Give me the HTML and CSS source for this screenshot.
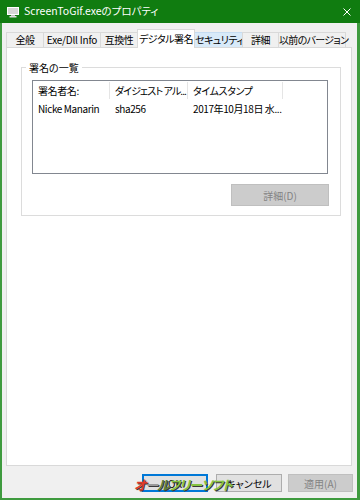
FILE: index.html
```html
<!DOCTYPE html>
<html lang="ja">
<head>
  <meta charset="UTF-8" />
  <title>ScreenToGif.exeのプロパティ</title>
  <link rel="stylesheet" href="styles.css">
</head>
<body>
  <div class="window">
    <div class="titlebar">
      <svg class="app-icon" width="12" height="11" viewBox="0 0 12 11">
        <rect x="0.5" y="0.5" width="11" height="7" fill="#d6d6d6" stroke="#ffffff"/>
        <rect x="4" y="8" width="4" height="1" fill="#bfbfbf"/>
        <rect x="2.5" y="9" width="7" height="1.5" fill="#e0e0e0"/>
      </svg>
      <span class="title">ScreenToGif.exeのプロパティ</span>
      <svg class="close" width="8" height="8" viewBox="0 0 8 8">
        <path d="M0.5 0.5 L7.5 7.5 M7.5 0.5 L0.5 7.5" stroke="#ffffff" stroke-width="1"/>
      </svg>
    </div>

    <div class="frame">
      <div class="tabs">
        <div class="tab">全般</div>
        <div class="tab">Exe/Dll Info</div>
        <div class="tab">互換性</div>
        <div class="tab tab-active">デジタル署名</div>
        <div class="tab tab-hover">セキュリティ</div>
        <div class="tab">詳細</div>
        <div class="tab">以前のバージョン</div>
      </div>

      <div class="panel">
        <fieldset class="group">
          <legend>署名の一覧</legend>
          <div class="list">
            <div class="list-head">
              <div class="col col-name">署名者名:</div>
              <div class="col col-digest">ダイジェスト アル...</div>
              <div class="col col-time">タイムスタンプ</div>
              <div class="col col-rest"></div>
            </div>
            <div class="list-row">
              <div class="col col-name">Nicke Manarin</div>
              <div class="col col-digest">sha256</div>
              <div class="col col-time">2017年10月18日 水...</div>
            </div>
          </div>
          <div class="group-actions">
            <button class="btn btn-disabled btn-detail">詳細(D)</button>
          </div>
        </fieldset>
      </div>

      <div class="actions">
        <button class="btn btn-default">OK</button>
        <button class="btn">キャンセル</button>
        <button class="btn btn-disabled">適用(A)</button>
        <div class="watermark"><span class="wm-red">オ</span><span class="wm-gray">ー</span><span class="wm-dark">ル</span><span class="wm-green">フリーソフト</span></div>
      </div>
    </div>
  </div>
</body>
</html>
```

FILE: styles.css
```css
* {
  margin: 0;
  padding: 0;
  box-sizing: border-box;
}

body {
  width: 360px;
  height: 500px;
  overflow: hidden;
  font-family: 'Noto Sans CJK JP', 'Noto Sans', sans-serif;
  font-size: 10px;
  font-feature-settings: "palt";
  color: #000;
  background: #f0f0f0;
}

.window {
  display: flex;
  flex-direction: column;
  height: 500px;
}

/* Title bar */
.titlebar {
  height: 23px;
  background: #107c10;
  display: flex;
  align-items: center;
  padding: 0 9px 0 7px;
  color: #fff;
}

.app-icon {
  margin-right: 5px;
  margin-top: 1px;
}

.title {
  font-size: 10.5px;
  flex: 1;
  line-height: 1;
}

.close {
  margin-top: 1px;
}

/* Dialog body */
.frame {
  flex: 1;
  display: flex;
  flex-direction: column;
  border: 2px solid #3f9b3f;
  border-top: 0;
  border-right-width: 3px;
  padding: 6px 5px 6px 4px;
}

.tabs {
  display: flex;
  align-items: flex-end;
  height: 18px;
  position: relative;
  z-index: 1;
}

.tab {
  height: 15px;
  line-height: 14px;
  text-align: center;
  white-space: nowrap;
  letter-spacing: -0.5px;
  border: 1px solid #d9d9d9;
  border-bottom: 0;
  background: #f0f0f0;
  margin-right: -1px;
}

.tab:nth-child(1) { width: 38px; }
.tab:nth-child(2) { width: 58px; letter-spacing: -0.2px; }
.tab:nth-child(3) { width: 38px; }
.tab:nth-child(4) { width: 58px; }
.tab:nth-child(5) { width: 49px; }
.tab:nth-child(6) { width: 37px; }
.tab:nth-child(7) { width: 68px; letter-spacing: -0.7px; }

.tab-active {
  height: 19px;
  margin-bottom: -1px;
  background: #fff;
  line-height: 17px;
  position: relative;
}

.tab-hover {
  background: #d8eaf9;
  border-color: #c5dcf2;
}

.panel {
  flex: 1;
  background: #fff;
  border: 1px solid #d9d9d9;
}

/* Group box */
.group {
  margin: 13px 10px 0 14px;
  border: 1px solid #dcdcdc;
  padding: 6px 12px 9px 10px;
}

.group legend {
  line-height: 13px;
  padding: 0 3px;
  margin-left: -6px;
}

.list {
  height: 94px;
  border: 1px solid #828790;
}

.list-head {
  display: flex;
  height: 19px;
  align-items: stretch;
  margin-bottom: 1px;
}

.list-head .col {
  line-height: 17px;
  border-right: 1px solid #e5e5e5;
  margin: 1px 0;
}

.list-head .col-digest {
  letter-spacing: -0.9px;
}

.list-head .col-rest {
  border-right: 0;
}

.list-row {
  display: flex;
  height: 16px;
  line-height: 15px;
}

.col {
  padding-left: 5px;
  white-space: nowrap;
  overflow: hidden;
  letter-spacing: -0.4px;
}

.col-name { width: 77px; }
.col-digest { width: 78px; }
.col-time { width: 95px; }
.col-rest { flex: 1; }

.group-actions {
  display: flex;
  justify-content: flex-end;
  margin-top: 10px;
  margin-right: -1px;
}

/* Buttons */
.btn {
  font-family: inherit;
  font-size: 10px;
  font-feature-settings: "palt";
  height: 18px;
  width: 66px;
  background: #e1e1e1;
  border: 1px solid #adadad;
  color: #000;
  line-height: 15px;
}

.btn-detail {
  width: 98px;
  height: 22px;
}

.btn-disabled {
  background: #cccccc;
  border-color: #bfbfbf;
  color: #838383;
}

.btn-default {
  border: 2px solid #0078d7;
}

.actions {
  position: relative;
  display: flex;
  justify-content: flex-end;
  gap: 8px;
  margin-top: 8px;
  margin-right: -1px;
}

.actions .btn-disabled {
  margin-left: -2px;
  width: 65px;
}

/* site watermark over the buttons */
.watermark {
  position: absolute;
  left: 128px;
  top: 2px;
  font-size: 13px;
  font-weight: bold;
  font-style: italic;
  letter-spacing: -1px;
  line-height: 18px;
  text-shadow: 1px 1px 0 #3a3a3a;
  white-space: nowrap;
}

.wm-red { color: #e03a2a; }
.wm-gray { color: #9a9a9a; }
.wm-dark { color: #5e7f3a; }
.wm-green { color: #86c440; }
```
